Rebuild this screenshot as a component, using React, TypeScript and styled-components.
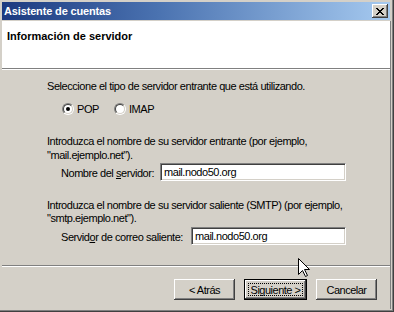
import React from "react";
import styled, { createGlobalStyle } from "styled-components";

const Global = createGlobalStyle`
  html, body { margin: 0; padding: 0; background: #d4d0c8; }
  body { font-family: "Liberation Sans", Arial, sans-serif; font-size: 11px; color: #000; }
  * { box-sizing: border-box; }
`;

const Window = styled.div`
  position: relative;
  width: 394px;
  height: 312px;
  background: #d4d0c8;
  padding: 2px 3px 3px 2px;
  display: flex;
  flex-direction: column;
  box-shadow: inset -1px -1px 0 #404040, inset -2px -2px 0 #808080;
  overflow: hidden;
`;

const TitleBar = styled.div`
  height: 18px;
  margin-right: 1px;
  background: linear-gradient(90deg, #1c3a80 0%, #4a72b0 40%, #a6caf0 100%);
  display: flex;
  align-items: center;
  justify-content: space-between;
  padding: 0 2px 0 2px;
`;

const Title = styled.span`
  color: #fff;
  font-weight: bold;
  font-size: 11px;
  letter-spacing: -0.15px;
`;

const CloseBtn = styled.div`
  width: 16px;
  height: 14px;
  background: #d4d0c8;
  box-shadow: inset -1px -1px 0 #404040, inset 1px 1px 0 #fff, inset -2px -2px 0 #808080;
  display: flex;
  align-items: center;
  justify-content: center;
`;

const Client = styled.div`
  flex: 1;
  margin-top: 1px;
  display: flex;
  flex-direction: column;
  border-right: 1px solid #808080;
`;

const Header = styled.div`
  height: 47px;
  background: #fff;
  padding: 9px 0 0 5px;
`;

const HeaderTitle = styled.div`
  font-weight: bold;
  font-size: 11px;
  line-height: 13px;
`;

const Etched = styled.div`
  height: 2px;
  border-top: 1px solid #808080;
  border-bottom: 1px solid #fff;
  flex: none;
`;

const Content = styled.div`
  height: 195px;
  padding: 10px 44px 0 45px;
  display: flex;
  flex-direction: column;
  letter-spacing: -0.45px;
`;

const Para = styled.div<{ $mt: number; $lh?: number }>`
  margin-top: ${(p) => p.$mt}px;
  line-height: ${(p) => p.$lh ?? 13}px;
`;

const RadioRow = styled.div`
  margin-top: 9px;
  height: 14px;
  padding-left: 15px;
  display: flex;
  align-items: center;
`;

const RadioItem = styled.label<{ $w?: number }>`
  display: flex;
  align-items: center;
  gap: 3px;
  width: ${(p) => (p.$w ? `${p.$w}px` : "auto")};
`;

const RadioCircle = styled.span<{ $checked?: boolean }>`
  position: relative;
  width: 12px;
  height: 12px;
  border-radius: 50%;
  border: 1px solid;
  border-color: #808080 #fff #fff #808080;
  display: inline-flex;
  flex: none;
  &::before {
    content: "";
    width: 10px;
    height: 10px;
    border-radius: 50%;
    border: 1px solid;
    border-color: #404040 #d4d0c8 #d4d0c8 #404040;
    background: #fff;
    box-sizing: border-box;
  }
  &::after {
    content: "";
    display: ${(p) => (p.$checked ? "block" : "none")};
    position: absolute;
    left: 3px;
    top: 3px;
    width: 4px;
    height: 4px;
    border-radius: 50%;
    background: #000;
  }
`;

const FieldRow = styled.div<{ $mt: number }>`
  margin-top: ${(p) => p.$mt}px;
  padding-left: 14px;
  display: flex;
  align-items: center;
  height: 18px;
`;

const FieldLabel = styled.span<{ $w: number }>`
  width: ${(p) => p.$w}px;
  flex: none;
  padding-top: 2px;
`;

const TextBox = styled.div`
  flex: 1;
  height: 18px;
  background: #fff;
  border: 1px solid;
  border-color: #808080 #fff #fff #808080;
  box-shadow: inset 1px 1px 0 #404040, inset -1px -1px 0 #d4d0c8;
  padding: 2px 0 0 3px;
  line-height: 13px;
  white-space: nowrap;
`;

const Footer = styled.div`
  flex: 1;
  display: flex;
  justify-content: flex-end;
  align-items: flex-start;
  gap: 10px;
  padding: 12px 13px 0 0;
`;

const Button = styled.div<{ $default?: boolean }>`
  width: ${(p) => (p.$default ? 63 : 61)}px;
  height: 21px;
  background: #d4d0c8;
  display: flex;
  align-items: center;
  justify-content: center;
  letter-spacing: -0.5px;
  position: relative;
  border: ${(p) => (p.$default ? "1px solid #000" : "none")};
  box-shadow: inset -1px -1px 0 #404040, inset 1px 1px 0 #fff, inset -2px -2px 0 #808080;
  ${(p) => (p.$default ? "margin: 0 -1px;" : "")}
`;

const FocusRing = styled.span`
  position: absolute;
  inset: 3px 3px 3px 3px;
  border: 1px dotted #000;
`;

const Cursor = styled.svg`
  position: absolute;
  left: 298px;
  top: 258px;
`;

export default function App() {
  return (
    <>
      <Global />
      <Window>
        <TitleBar>
          <Title>Asistente de cuentas</Title>
          <CloseBtn>
            <svg width="8" height="7" viewBox="0 0 8 7" shapeRendering="crispEdges">
              <path d="M0 0h2v1H0zM6 0h2v1H6zM1 1h2v1H1zM5 1h2v1H5zM2 2h4v1H2zM3 3h2v1H3zM2 4h4v1H2zM1 5h2v1H1zM5 5h2v1H5zM0 6h2v1H0zM6 6h2v1H6z" fill="#000" />
            </svg>
          </CloseBtn>
        </TitleBar>
        <Client>
          <Header>
            <HeaderTitle>Información de servidor</HeaderTitle>
          </Header>
          <Etched />
          <Content>
            <Para $mt={0}>Seleccione el tipo de servidor entrante que está utilizando.</Para>
            <RadioRow>
              <RadioItem $w={52}>
                <RadioCircle $checked />
                POP
              </RadioItem>
              <RadioItem>
                <RadioCircle />
                IMAP
              </RadioItem>
            </RadioRow>
            <Para $mt={18} $lh={14}>
              Introduzca el nombre de su servidor entrante (por ejemplo,
              <br />
              "mail.ejemplo.net").
            </Para>
            <FieldRow $mt={1}>
              <FieldLabel $w={99}>
                Nombre del <u>s</u>ervidor:
              </FieldLabel>
              <TextBox>mail.nodo50.org</TextBox>
            </FieldRow>
            <Para $mt={18}>
              Introduzca el nombre de su servidor saliente (SMTP) (por ejemplo,
              <br />
              "smtp.ejemplo.net").
            </Para>
            <FieldRow $mt={2}>
              <FieldLabel $w={130}>
                Servid<u>o</u>r de correo saliente:
              </FieldLabel>
              <TextBox>mail.nodo50.org</TextBox>
            </FieldRow>
          </Content>
          <Etched />
          <Footer>
            <Button>&lt; Atrás</Button>
            <Button $default>
              <FocusRing />
              Siguiente &gt;
            </Button>
            <Button>Cancelar</Button>
          </Footer>
        </Client>
        <Cursor width="12" height="19" viewBox="0 0 12 19">
          <path d="M0.5 0.5 L0.5 16.5 L4.5 12.5 L7.5 18.5 L9.5 17.5 L6.5 11.5 L11.5 11.5 Z" fill="#fff" stroke="#000" strokeWidth="1" />
        </Cursor>
      </Window>
    </>
  );
}
